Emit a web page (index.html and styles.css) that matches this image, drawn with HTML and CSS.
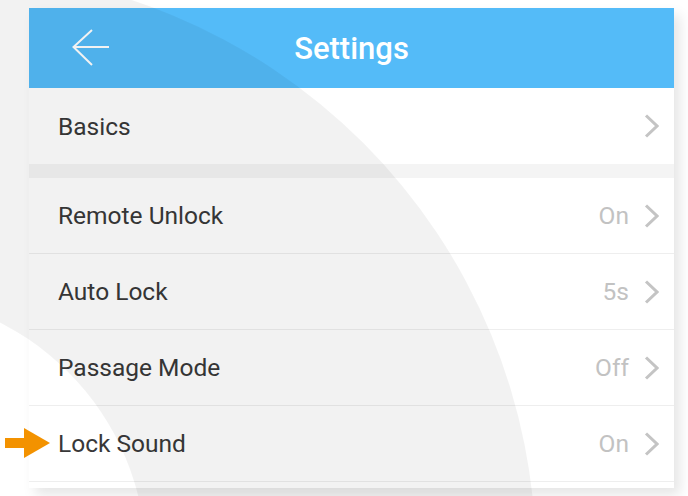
FILE: index.html
```html
<!DOCTYPE html>
<html lang="en">
<head>
  <meta charset="UTF-8">
  <title>Settings</title>
  <link rel="stylesheet" href="styles.css">
</head>
<body>
<div class="screen">
  <div class="topbar">
    <svg class="back" width="38" height="38" viewBox="0 0 38 38">
      <path d="M20 1 L1.5 18 L20 36 M1.5 18 L37 18" fill="none" stroke="#fff" stroke-width="2"/>
    </svg>
    <div class="title">Settings</div>
    <div></div>
  </div>
  <div class="row first">
    <span class="label">Basics</span>
    <svg class="chev" width="15" height="24" viewBox="0 0 15 24"><polyline points="2,1.5 13,12 2,22.5" fill="none" stroke="#c4c4c4" stroke-width="3"/></svg>
  </div>
  <div class="gap"></div>
  <div class="row">
    <span class="label">Remote Unlock</span>
    <span class="value">On</span>
    <svg class="chev" width="15" height="24" viewBox="0 0 15 24"><polyline points="2,1.5 13,12 2,22.5" fill="none" stroke="#c4c4c4" stroke-width="3"/></svg>
  </div>
  <div class="row">
    <span class="label">Auto Lock</span>
    <span class="value">5s</span>
    <svg class="chev" width="15" height="24" viewBox="0 0 15 24"><polyline points="2,1.5 13,12 2,22.5" fill="none" stroke="#c4c4c4" stroke-width="3"/></svg>
  </div>
  <div class="row">
    <span class="label">Passage Mode</span>
    <span class="value">Off</span>
    <svg class="chev" width="15" height="24" viewBox="0 0 15 24"><polyline points="2,1.5 13,12 2,22.5" fill="none" stroke="#c4c4c4" stroke-width="3"/></svg>
  </div>
  <div class="row">
    <svg class="pointer" width="46" height="31" viewBox="0 0 46 31">
      <rect x="0" y="10" width="21" height="10" fill="#f39200"/>
      <polygon points="19,0 19,30 45,15" fill="#f39200"/>
    </svg>
    <span class="label">Lock Sound</span>
    <span class="value">On</span>
    <svg class="chev" width="15" height="24" viewBox="0 0 15 24"><polyline points="2,1.5 13,12 2,22.5" fill="none" stroke="#c4c4c4" stroke-width="3"/></svg>
  </div>
</div>
<svg class="ring" width="688" height="496" viewBox="0 0 688 496">
  <path fill-rule="evenodd" fill="rgba(0,0,0,0.05)"
    d="M-644 560 a590 590 0 1 0 1180 0 a590 590 0 1 0 -1180 0 Z M-386 560 a266 266 0 1 0 532 0 a266 266 0 1 0 -532 0 Z"/>
</svg>
</body>
</html>
```

FILE: styles.css
```css
body {
  margin: 0;
  width: 688px;
  height: 496px;
  overflow: hidden;
  position: relative;
  background: #fff;
  font-family: Roboto, "Liberation Sans", sans-serif;
}
.screen {
  margin: 8px 14px 0 29px;
  padding-bottom: 6px;
  background: #fff;
  box-shadow: 6px 7px 12px rgba(0,0,0,0.1);
}
.topbar {
  height: 80px;
  background: #54bbf8;
  display: grid;
  grid-template-columns: 1fr auto 1fr;
  align-items: center;
  padding: 0 43px;
  color: #fff;
}
.title {
  font-size: 31px;
  font-weight: 500;
}
.back {
  display: block;
}
.row {
  box-sizing: border-box;
  height: 76px;
  display: flex;
  align-items: center;
  padding: 0 15px 0 29px;
  border-bottom: 1px solid #eee;
  font-size: 24.5px;
  color: #383838;
  position: relative;
}
.row.first {
  border-bottom: none;
}
.label {
  flex: 1;
}
.value {
  color: #c2c2c2;
  margin-right: 15px;
}
.chev {
  display: block;
}
.gap {
  height: 14px;
  background: #f4f4f4;
}
.pointer {
  position: absolute;
  left: -24px;
  top: 50%;
  margin-top: -16px;
}
.ring {
  position: absolute;
  left: 0;
  top: 0;
  pointer-events: none;
}
```
